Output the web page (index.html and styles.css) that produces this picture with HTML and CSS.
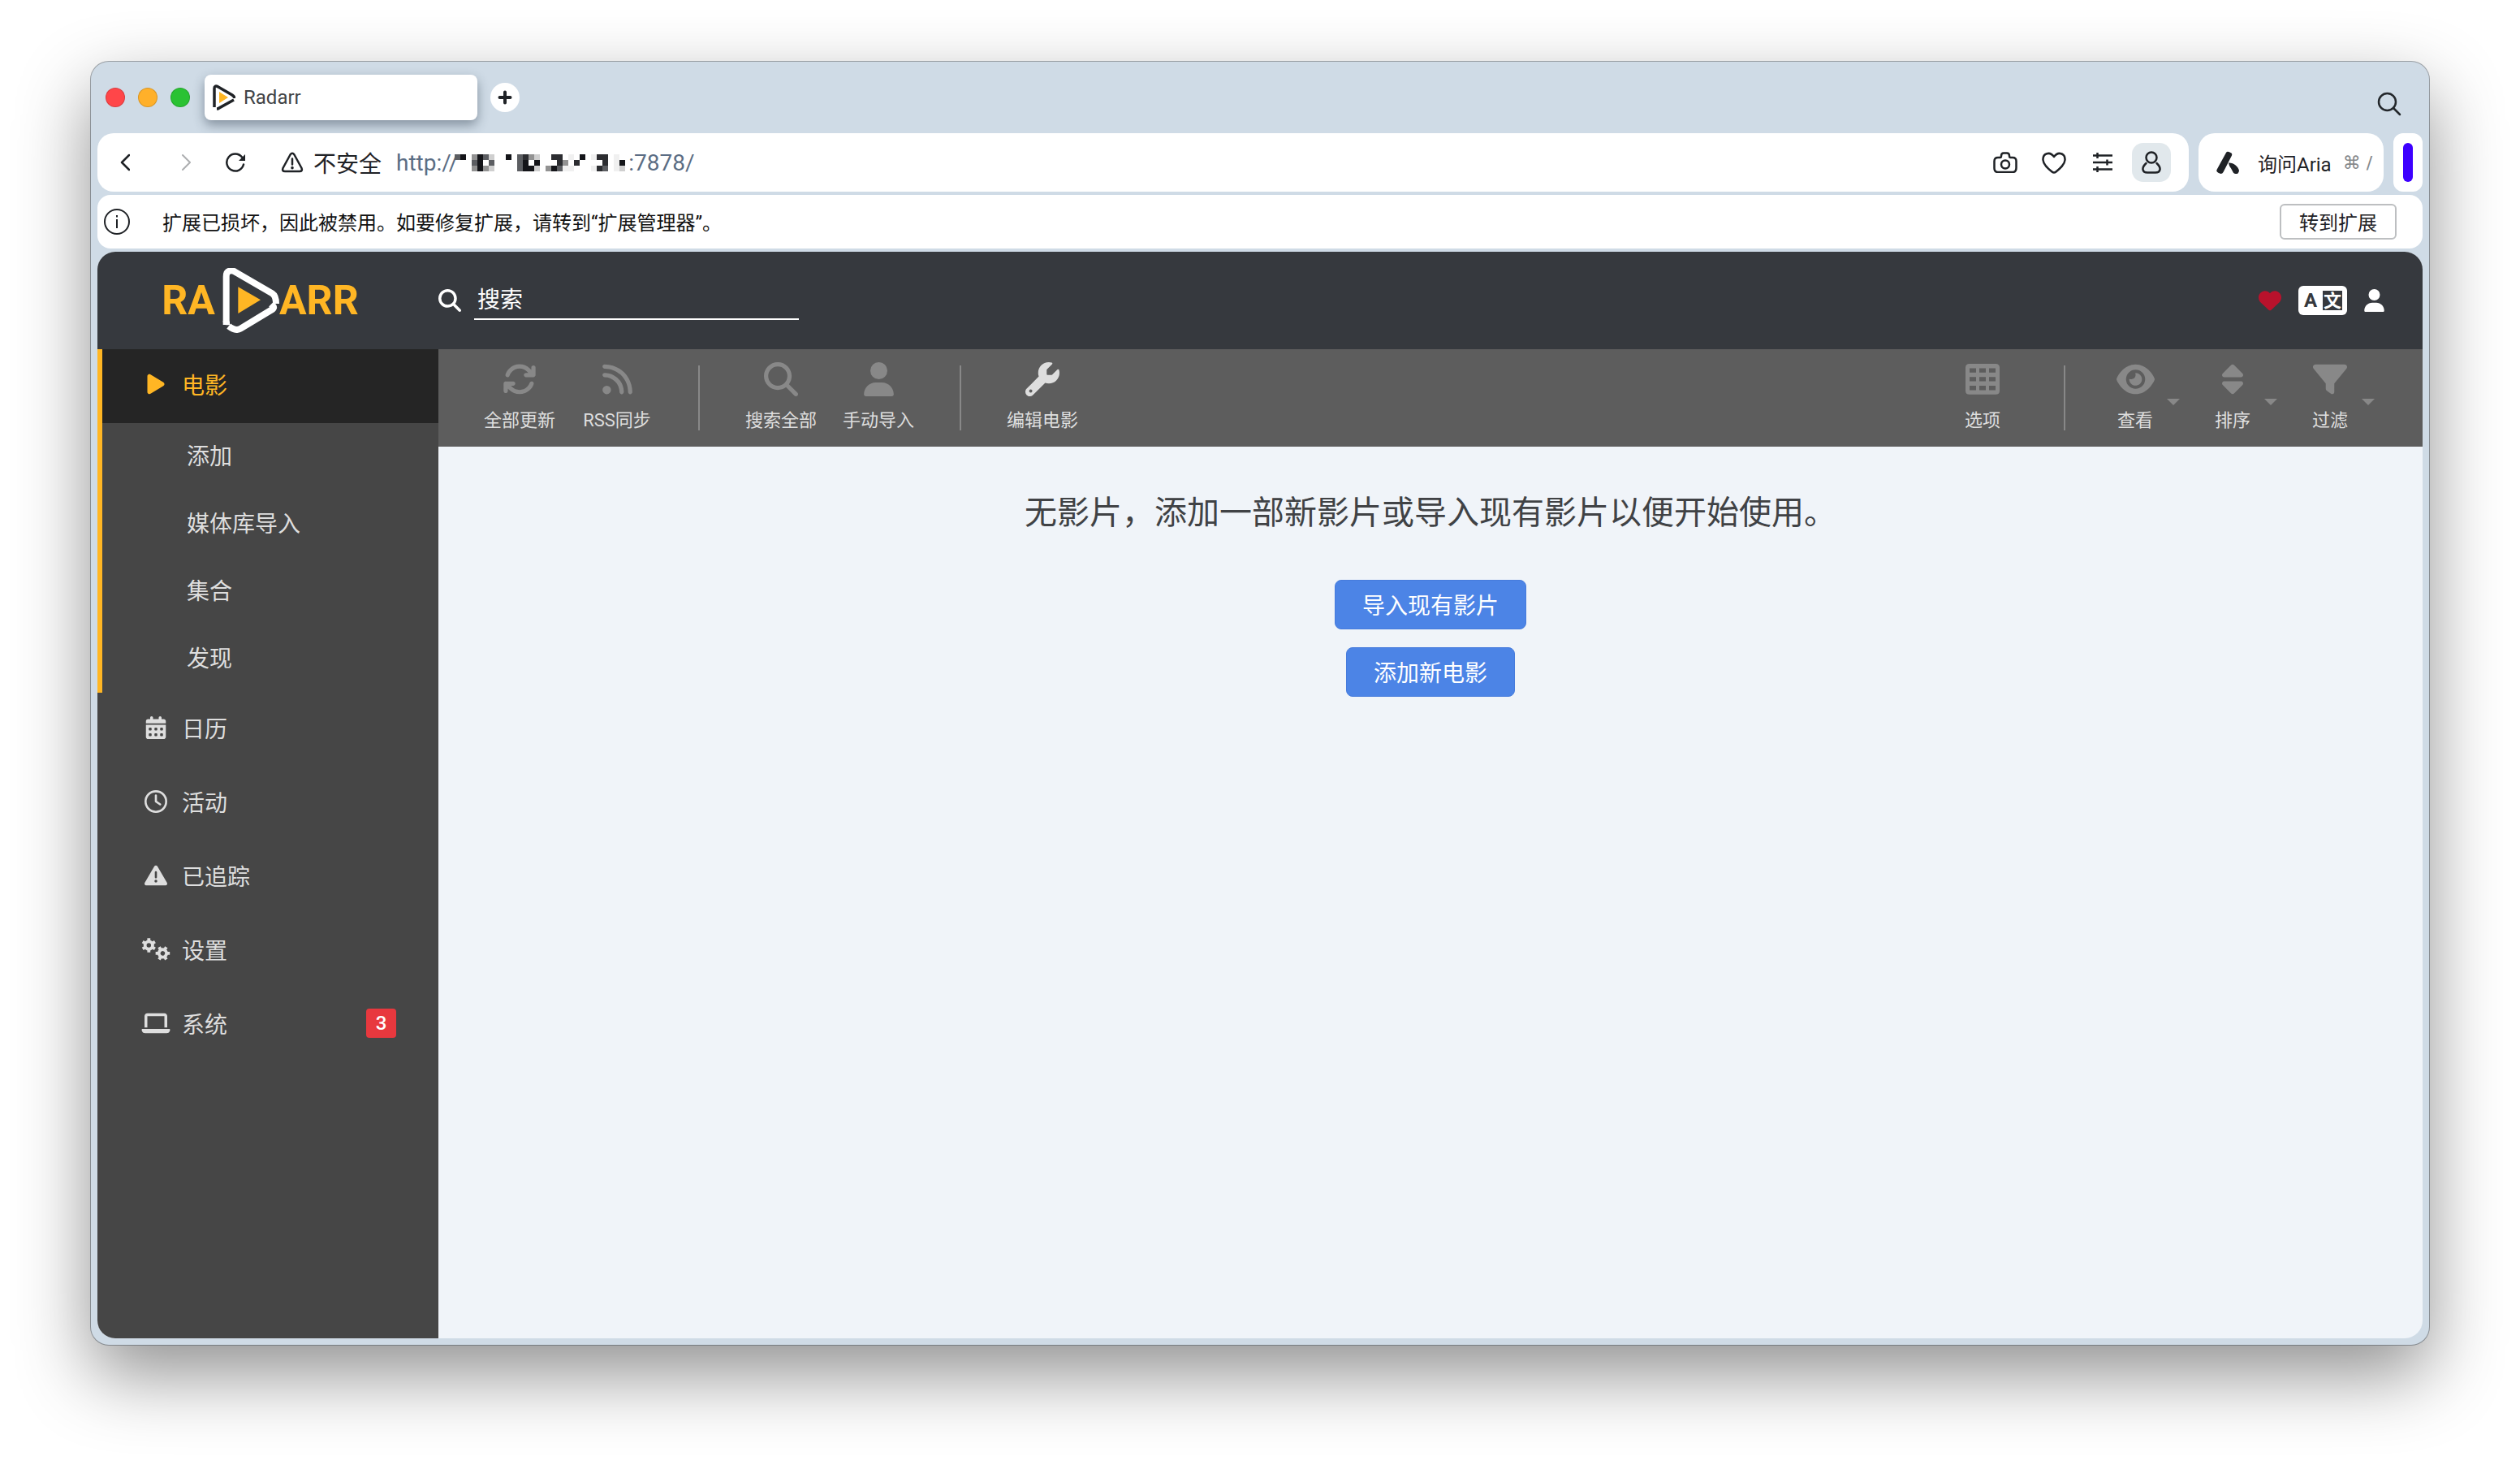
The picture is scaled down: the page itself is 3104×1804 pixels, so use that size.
FILE: index.html
```html
<!DOCTYPE html>
<html lang="zh-CN">
<head>
<meta charset="utf-8">
<title>Radarr</title>
<link rel="stylesheet" href="styles.css">
</head>
<body>
<div class="window">
  <div class="tab-strip">
    <div class="lights">
      <span class="light light-close"></span>
      <span class="light light-min"></span>
      <span class="light light-max"></span>
    </div>
    <button class="tab" type="button">
      <svg width="28" height="32" viewBox="0 0 28 32" fill="none"><path d="M2 28V5q0-4 4-2.500L24 13q3 2 3 4" stroke="#1f2226" stroke-width="3.500"/><path d="M5 30q2 0 3-1L26 19" stroke="#1f2226" stroke-width="3.500"/><path d="M8 9l11 7-11 7z" fill="#ffb624"/></svg>
      <span>Radarr</span>
    </button>
    <button class="new-tab" type="button" aria-label="新标签页">
      <svg width="18" height="18" viewBox="0 0 18 18"><path d="M9 2.500v13M2.500 9h13" stroke="#1f2226" stroke-width="4" stroke-linecap="round"/></svg>
    </button>
    <button class="tab-search" type="button" aria-label="搜索标签页">
      <svg width="30" height="30" viewBox="0 0 30 30" fill="none" stroke="#23272b" stroke-width="2.500" stroke-linecap="round"><circle cx="12.500" cy="12.500" r="10.500"/><path d="M20 20l8 8"/></svg>
    </button>
  </div>

  <div class="address-row">
    <div class="address-bar">
      <button class="nav-back" type="button" aria-label="后退"><svg width="12" height="22" viewBox="0 0 12 22" fill="none"><path d="M11 2L2 11l9 9" stroke="#1f2226" stroke-width="2.500" stroke-linecap="round" stroke-linejoin="round"/></svg></button>
      <button class="nav-forward" type="button" aria-label="前进"><svg width="12" height="22" viewBox="0 0 12 22" fill="none"><path d="M1 2l9 9-9 9" stroke="#adafb1" stroke-width="2" stroke-linecap="round" stroke-linejoin="round"/></svg></button>
      <button class="nav-reload" type="button" aria-label="刷新"><svg width="24" height="24" viewBox="0 0 24 24" fill="none"><path d="M22 14.500A10.500 10.500 0 1 1 20 5.500" stroke="#1f2226" stroke-width="2.500" stroke-linecap="round"/><path d="M24 2v8h-8z" fill="#1f2226"/></svg></button>
      <svg class="warn" width="28" height="26" viewBox="0 0 28 26" fill="none" stroke="#1f2226" stroke-width="2.500" stroke-linecap="round" stroke-linejoin="round"><path d="M11.500 3.500q2.500-3.500 5 0L25.500 20q1.500 4-2.500 4H5q-4 0-2.500-4zM14 8.500v7"/><path d="M14 19.500v.2" stroke-width="3.500"/></svg>
      <span class="insecure">不安全</span>
      <div class="url"><span>http://</span><svg class="mask" width="210" height="21" viewBox="0 0 30 3" shape-rendering="crispEdges">
        <path fill="#141519" d="M1 0h1v1H1zM4 0h1v3H4zM9 0h1v1H9zM12 1h1v2h-1zM13 2h1v1h-1zM14 1h1v1h-1zM17 2h1v1h-1zM22 0h1v1h-1zM29 1h1v1h-1z"/>
        <path fill="#2c2d31" d="M12 0h1v1h-1zM17 0h2v1h-2zM18 1h1v1h-1zM21 1h1v1h-1zM25 0h2v1h-2zM26 1h1v1h-1zM25 2h1v1h-1z"/>
        <path fill="#5c5e62" d="M0 0h1v1H0zM3 1h1v1H3zM5 0h1v1H5zM6 1h1v1H6zM11 0h1v3h-1zM18 2h1v1h-1zM26 2h1v1h-1z"/>
        <path fill="#929292" d="M3 0h1v1H3zM3 2h1v1H3zM5 2h1v1H5zM13 0h1v1h-1zM16 2h1v1h-1zM19 1h1v1h-1z"/>
        <path fill="#cfcfcf" d="M6 0h1v1H6zM6 2h1v1H6zM14 0h1v1h-1zM14 2h1v1h-1zM29 2h1v1h-1z"/>
        <path fill="#f0f0f0" d="M20 0h1v1h-1zM19 2h2v1h-2zM24 0h1v1h-1zM24 2h1v1h-1zM28 0h1v3h-1z"/>
      </svg><span>:7878/</span></div>
      <div class="address-actions">
        <button type="button" aria-label="快照"><svg width="30" height="26" viewBox="0 0 30 26" fill="none" stroke="#1f2226" stroke-width="2.500" stroke-linejoin="round"><path d="M6 7h2.500q1.500 0 1.500-2 0-3.500 3-3.500h4q3 0 3 3.500 0 2 1.500 2H24q4.500 0 4.500 4.500v8Q28.500 25 24 25H6q-4.500 0-4.500-5v-8.500Q1.500 7 6 7z"/><circle cx="15" cy="15.500" r="5"/></svg></button>
        <button type="button" aria-label="收藏"><svg width="30" height="27" viewBox="0 0 30 27" fill="none" stroke="#1f2226" stroke-width="2.500" stroke-linejoin="round"><path d="M15 6C10-1 1 1.500 1.500 10c.5 6 6 10.500 11 14.500q2.500 2 5 0c5-4 10.500-8.500 11-14.500C29 1.500 20-1 15 6z"/></svg></button>
        <button type="button" aria-label="设置"><svg width="26" height="26" viewBox="0 0 26 26" fill="none" stroke="#1f2226" stroke-width="2.500"><path d="M1 4.500h24M1 13h24M1 21.500h24M6.500 1v7M18.500 9.500v7M6.500 18v7"/></svg></button>
        <button class="profile" type="button" aria-label="个人资料"><svg width="24" height="28" viewBox="0 0 24 28" fill="none" stroke="#1f2226" stroke-width="2.500" stroke-linecap="round"><circle cx="12" cy="8" r="6.500"/><path d="M5.500 15C-1 21 1 26.500 7 26.500h10c6 0 8-5.500 1.500-11.500"/></svg></button>
      </div>
    </div>
    <button class="aria" type="button">
      <svg width="30" height="30" viewBox="0 0 30 30" fill="#1f2226"><path d="M13 3q1-2 3.500-1l2 1q2.500 1 1.500 3.500L9.500 27q-1 2-3 2Q0 27 1.500 24z"/><path d="M16 15.500C22 15 28 20 29 25q0 2-2 4h-3q-2 0-3-3c-1.500-4-4-5-5-10.500z"/></svg>
      <span>询问Aria</span><span class="shortcut">⌘ /</span>
    </button>
    <div class="side-pill"><span></span></div>
  </div>

  <div class="notice">
    <svg width="32" height="32" viewBox="0 0 32 32" fill="none" stroke="#1f2226" stroke-width="2"><circle cx="16" cy="16" r="15"/><path d="M16 13v11M16 8v2.500"/></svg>
    <p>扩展已损坏，因此被禁用。如要修复扩展，请转到“扩展管理器”。</p>
    <button type="button">转到扩展</button>
  </div>

  <div class="app">
    <header class="app-header">
      <a class="logo" href="#" aria-label="Radarr">
        <span>RA</span>
        <svg width="70" height="80" viewBox="282 30 210 240"><path class="ring" d="M296 240V62q0-22 20-22 6 0 12 4l138 80q14 9 14 38"/><path d="M284 225q0 16 13 16h12v-14z" fill="#fff"/><path class="ring" d="M462 164l8 8q4 6-4 11L349 254q-18 11-44-9"/><path d="M340 100v98l83-50z" fill="#ffb624"/></svg>
        <span>ARR</span>
      </a>
      <label class="search">
        <svg width="28" height="28" viewBox="0 0 512 512"><path d="M416 208c0 45.900-14.900 88.300-40 122.700L502.600 457.400c12.500 12.500 12.500 32.800 0 45.300s-32.800 12.500-45.300 0L330.700 376c-34.400 25.200-76.800 40-122.700 40C93.100 416 0 322.900 0 208S93.100 0 208 0S416 93.100 416 208zM208 352a144 144 0 1 0 0-288 144 144 0 1 0 0 288z"/></svg>
        <input type="text" placeholder="搜索" aria-label="搜索">
      </label>
      <div class="header-actions">
        <a class="donate" href="#" aria-label="捐赠"><svg width="28" height="28" viewBox="0 0 512 512"><path d="M47.600 300.400L228.300 469.100c7.500 7 17.400 10.900 27.700 10.900s20.200-3.900 27.700-10.900L464.400 300.400c30.400-28.300 47.600-68 47.600-109.500v-5.800c0-69.900-50.500-129.500-119.400-141C347 36.500 300.600 51.400 268 84L256 96 244 84c-32.600-32.600-79-47.500-124.600-39.900C50.500 55.600 0 115.200 0 185.100v5.800c0 41.500 17.200 81.200 47.600 109.500z"/></svg></a>
        <a href="#" aria-label="语言"><svg width="60" height="36" viewBox="0 0 60 36"><rect width="60" height="36" rx="6"/><rect class="cut" x="30" y="6" width="24" height="24"/><text class="cut glyph-a" x="15" y="26">A</text><text class="glyph-wen" x="42" y="26">文</text></svg></a>
        <button type="button" aria-label="用户"><svg width="25" height="28" viewBox="0 0 448 512"><path d="M224 256A128 128 0 1 0 224 0a128 128 0 1 0 0 256zm-45.700 48C79.800 304 0 383.800 0 482.300C0 498.700 13.300 512 29.700 512H418.300c16.400 0 29.700-13.300 29.700-29.700C448 383.800 368.200 304 269.700 304H178.300z"/></svg></button>
      </div>
    </header>

    <div class="app-body">
      <nav class="sidebar">
        <div class="group-active">
          <a class="item current" href="#"><svg width="36" height="28" viewBox="-137 0 658 512"><path d="M73 39c-14.800-9.100-33.400-9.400-48.500-.9S0 62.600 0 80V432c0 17.400 9.400 33.400 24.500 41.900s33.700 8.100 48.500-.9L361 297c14.300-8.700 23-24.200 23-41s-8.700-32.200-23-41L73 39z"/></svg>电影</a>
          <a class="child" href="#">添加</a>
          <a class="child" href="#">媒体库导入</a>
          <a class="child" href="#">集合</a>
          <a class="child" href="#">发现</a>
        </div>
        <a class="item" href="#"><svg width="36" height="28" viewBox="-105 0 658 512"><path d="M128 0c17.700 0 32 14.300 32 32V64H288V32c0-17.700 14.300-32 32-32s32 14.300 32 32V64h48c26.500 0 48 21.500 48 48v48H0V112C0 85.500 21.500 64 48 64H96V32c0-17.700 14.300-32 32-32zM0 192H448V464c0 26.500-21.500 48-48 48H48c-26.500 0-48-21.500-48-48V192zm64 80v32c0 8.800 7.200 16 16 16h32c8.800 0 16-7.200 16-16V272c0-8.800-7.200-16-16-16H80c-8.800 0-16 7.200-16 16zm128 0v32c0 8.800 7.200 16 16 16h32c8.800 0 16-7.200 16-16V272c0-8.800-7.200-16-16-16H208c-8.800 0-16 7.200-16 16zm144-16c-8.800 0-16 7.200-16 16v32c0 8.800 7.200 16 16 16h32c8.800 0 16-7.200 16-16V272c0-8.800-7.200-16-16-16H336zM64 400v32c0 8.800 7.200 16 16 16h32c8.800 0 16-7.200 16-16V400c0-8.800-7.200-16-16-16H80c-8.800 0-16 7.200-16 16zm144-16c-8.800 0-16 7.200-16 16v32c0 8.800 7.200 16 16 16h32c8.800 0 16-7.200 16-16V400c0-8.800-7.200-16-16-16H208zm112 16v32c0 8.800 7.200 16 16 16h32c8.800 0 16-7.200 16-16V400c0-8.800-7.200-16-16-16H336c-8.800 0-16 7.200-16 16z"/></svg>日历</a>
        <a class="item" href="#"><svg width="36" height="28" viewBox="-73 0 658 512"><path d="M464 256A208 208 0 1 1 48 256a208 208 0 1 1 416 0zM0 256a256 256 0 1 0 512 0A256 256 0 1 0 0 256zM232 120V256c0 8 4 15.500 10.700 20l96 64c11 7.400 25.900 4.400 33.300-6.700s4.400-25.900-6.700-33.300L280 243.200V120c0-13.300-10.700-24-24-24s-24 10.700-24 24z"/></svg>活动</a>
        <a class="item" href="#"><svg width="36" height="28" viewBox="-73 0 658 512"><path d="M256 32c14.200 0 27.300 7.500 34.500 19.800l216 368c7.300 12.400 7.300 27.700 .2 40.100S486.300 480 472 480H40c-14.300 0-27.600-7.700-34.700-20.100s-7-27.800 .2-40.100l216-368C228.700 39.500 241.800 32 256 32zm0 128c-13.300 0-24 10.700-24 24V296c0 13.300 10.700 24 24 24s24-10.700 24-24V184c0-13.300-10.700-24-24-24zm32 224a32 32 0 1 0 -64 0 32 32 0 1 0 64 0z"/></svg>已追踪</a>
        <a class="item" href="#"><svg width="36" height="28" viewBox="-9 0 658 512"><g class="gear"><g transform="translate(161 165)"><circle r="85"/><path d="M0-90V-160M0 90V160M78-45L139-80M-78 45L-139 80M78 45L139 80M-78-45L-139-80"/></g><g transform="translate(474 345) rotate(30)"><circle r="85"/><path d="M0-90V-160M0 90V160M78-45L139-80M-78 45L-139 80M78 45L139 80M-78-45L-139-80"/></g></g></svg>设置</a>
        <a class="item" href="#"><svg width="36" height="28" viewBox="-9 0 658 512"><path d="M128 32C92.700 32 64 60.700 64 96V352h64V96H512V352h64V96c0-35.300-28.700-64-64-64H128zM19.200 384C8.600 384 0 392.600 0 403.200C0 445.600 34.400 480 76.800 480H563.200c42.400 0 76.800-34.400 76.800-76.800c0-10.600-8.600-19.200-19.200-19.200H19.200z"/></svg>系统<span class="badge">3</span></a>
      </nav>

      <main class="page">
        <div class="toolbar">
          <button class="tool disabled" type="button"><svg width="42" height="42" viewBox="0 0 512 512"><path d="M105.100 202.600c7.700-21.800 20.200-42.300 37.800-59.800c62.500-62.500 163.800-62.500 226.300 0L386.300 160H352c-17.700 0-32 14.300-32 32s14.300 32 32 32H463.900c17.700 0 32-14.300 32-32V80c0-17.700-14.300-32-32-32s-32 14.300-32 32v35.200L414.400 97.600c-87.500-87.500-229.300-87.500-316.800 0C73.200 122 55.600 150.700 44.800 181.400c-5.900 16.700 2.900 34.900 19.500 40.800s34.900-2.900 40.800-19.500zM39 289.300c-5 1.500-9.800 4.200-13.700 8.200c-4 4-6.700 8.800-8.100 14c-.3 1.200-.6 2.500-.8 3.800c-.3 1.700-.4 3.400-.4 5.100V432c0 17.700 14.300 32 32 32s32-14.300 32-32V396.900l17.600 17.500c87.500 87.400 229.300 87.400 316.700 0c24.400-24.400 42.100-53.100 52.900-83.700c5.900-16.700-2.900-34.900-19.500-40.800s-34.900 2.900-40.800 19.500c-7.700 21.800-20.200 42.300-37.800 59.800c-62.500 62.500-163.800 62.500-226.300 0l-.1-.1L125.600 352H160c17.700 0 32-14.300 32-32s-14.300-32-32-32H48.400c-1.600 0-3.200 .1-4.800 .3s-3.100 .5-4.600 1z"/></svg>全部更新</button>
          <button class="tool disabled" type="button"><svg width="37" height="42" viewBox="0 0 448 512"><path d="M0 64C0 46.300 14.300 32 32 32c229.800 0 416 186.200 416 416c0 17.700-14.300 32-32 32s-32-14.300-32-32C384 253.600 226.400 96 32 96C14.300 96 0 81.700 0 64zM0 416a64 64 0 1 1 128 0A64 64 0 1 1 0 416zM32 160c159.100 0 288 128.900 288 288c0 17.700-14.300 32-32 32s-32-14.300-32-32c0-123.700-100.300-224-224-224c-17.700 0-32-14.300-32-32s14.300-32 32-32z"/></svg>RSS同步</button>
          <span class="separator"></span>
          <button class="tool disabled" type="button"><svg width="42" height="42" viewBox="0 0 512 512"><path d="M416 208c0 45.900-14.900 88.300-40 122.700L502.600 457.400c12.500 12.500 12.500 32.800 0 45.300s-32.800 12.500-45.300 0L330.700 376c-34.400 25.200-76.800 40-122.700 40C93.100 416 0 322.900 0 208S93.100 0 208 0S416 93.100 416 208zM208 352a144 144 0 1 0 0-288 144 144 0 1 0 0 288z"/></svg>搜索全部</button>
          <button class="tool disabled" type="button"><svg width="37" height="42" viewBox="0 0 448 512"><path d="M224 256A128 128 0 1 0 224 0a128 128 0 1 0 0 256zm-45.700 48C79.800 304 0 383.800 0 482.300C0 498.700 13.300 512 29.700 512H418.300c16.400 0 29.700-13.300 29.700-29.700C448 383.800 368.200 304 269.700 304H178.300z"/></svg>手动导入</button>
          <span class="separator"></span>
          <button class="tool" type="button"><svg width="42" height="42" viewBox="0 0 512 512"><path d="M352 320c88.400 0 160-71.600 160-160c0-15.300-2.200-30.100-6.200-44.200c-3.100-10.800-16.400-13.200-24.300-5.300l-76.800 76.800c-3 3-7.100 4.700-11.300 4.700H336c-8.800 0-16-7.200-16-16V118.600c0-4.200 1.700-8.300 4.700-11.300l76.800-76.800c7.900-7.900 5.400-21.200-5.300-24.300C382.100 2.200 367.300 0 352 0C263.600 0 192 71.600 192 160c0 19.100 3.400 37.500 9.500 54.500L19.900 396.100C7.200 408.800 0 426.100 0 444.100C0 481.600 30.400 512 67.900 512c18 0 35.300-7.200 48-19.900L297.500 310.500c17 6.200 35.400 9.500 54.500 9.500zM80 408a24 24 0 1 1 0 48 24 24 0 1 1 0-48z"/></svg>编辑电影</button>
          <div class="toolbar-right">
            <button class="tool disabled" type="button"><svg width="42" height="42" viewBox="0 0 42 42"><path fill-rule="evenodd" d="M5 0H37q5 0 5 5V37q0 5-5 5H5q-5 0-5-5V5q0-5 5-5zM5 6v6h8V6zM17 6v6h8V6zM29 6v6h8V6zM5 18v6h8v-6zM17 18v6h8v-6zM29 18v6h8v-6zM5 30v6h8v-6zM17 30v6h8v-6zM29 30v6h8v-6z" transform="translate(0 2) scale(1 .9)"/></svg>选项</button>
            <span class="separator"></span>
            <button class="tool menu disabled" type="button"><svg width="47" height="42" viewBox="0 0 576 512"><path d="M288 32c-80.800 0-145.500 36.800-192.600 80.600C48.600 156 17.300 208 2.500 243.700c-3.300 7.900-3.300 16.700 0 24.600C17.300 304 48.600 356 95.400 399.400C142.500 443.200 207.200 480 288 480s145.500-36.800 192.600-80.600c46.800-43.500 78.100-95.400 93-131.100c3.300-7.900 3.300-16.700 0-24.600c-14.900-35.700-46.200-87.700-93-131.100C433.500 68.800 368.800 32 288 32zM144 256a144 144 0 1 1 288 0 144 144 0 1 1 -288 0zm144-64c0 35.300-28.700 64-64 64c-7.100 0-13.900-1.200-20.300-3.300c-5.500-1.800-11.900 1.600-11.700 7.400c.3 6.900 1.300 13.800 3.200 20.700c13.700 51.200 66.400 81.600 117.600 67.900s81.600-66.400 67.900-117.600c-11.100-41.500-47.800-69.400-88.600-71.100c-5.800-.2-9.200 6.100-7.400 11.700c2.100 6.400 3.300 13.200 3.300 20.300z"/></svg>查看<span class="caret"></span></button>
            <button class="tool menu disabled" type="button"><svg width="26" height="42" viewBox="0 0 320 512"><path d="M137.400 41.400c12.500-12.500 32.800-12.500 45.300 0l128 128c9.200 9.200 11.900 22.900 6.900 34.900s-16.600 19.800-29.600 19.800H32c-12.900 0-24.600-7.800-29.600-19.800s-2.200-25.700 6.900-34.900l128-128zm0 429.300l-128-128c-9.200-9.200-11.900-22.900-6.900-34.900s16.600-19.800 29.600-19.800H288c12.900 0 24.600 7.800 29.600 19.800s2.200 25.700-6.900 34.900l-128 128c-12.500 12.500-32.800 12.500-45.300 0z"/></svg>排序<span class="caret"></span></button>
            <button class="tool menu disabled" type="button"><svg width="42" height="42" viewBox="0 0 512 512"><path d="M3.900 54.900C10.500 40.900 24.500 32 40 32H472c15.500 0 29.500 8.900 36.100 22.900s4.600 30.500-5.200 42.500L320 320.900V448c0 12.100-6.800 23.200-17.700 28.600s-23.800 4.300-33.500-3l-64-48c-8.100-6-12.800-15.500-12.800-25.600V320.900L9 97.300C-.7 85.400-2.800 68.800 3.900 54.900z"/></svg>过滤<span class="caret"></span></button>
          </div>
        </div>
        <section class="empty">
          <p>无影片，添加一部新影片或导入现有影片以便开始使用。</p>
          <button type="button">导入现有影片</button>
          <button type="button">添加新电影</button>
        </section>
      </main>
    </div>
  </div>
</div>
</body>
</html>
```
FILE: styles.css
```css
* { box-sizing: border-box; }

body {
  margin: 0;
  min-height: 100vh;
  padding: 76px 112px 148px;
  display: flex;
  background: #fff;
  font-family: Roboto, "Noto Sans CJK SC", sans-serif;
  font-size: 28px;
  color: #1f2226;
}

button {
  margin: 0;
  padding: 0;
  border: 0;
  background: none;
  font: inherit;
  color: inherit;
  display: flex;
  align-items: center;
  justify-content: center;
}

a { color: inherit; text-decoration: none; }
p { margin: 0; }
svg { display: block; flex: none; }

.window {
  flex: 1;
  min-width: 0;
  display: flex;
  flex-direction: column;
  padding: 0 8px 8px;
  border-radius: 22px;
  background: #cfdbe6;
  box-shadow: 0 0 0 1px rgba(70, 80, 90, .5), 0 36px 90px rgba(0, 0, 0, .44);
}

/* Tab strip */
.tab-strip { display: flex; align-items: center; height: 88px; padding: 0 26px 0 10px; }
.lights { display: flex; gap: 16px; margin-right: 18px; }
.light { width: 24px; height: 24px; border-radius: 50%; border: 1px solid rgba(0, 0, 0, .15); }
.light-close { background: #ff4649; }
.light-min { background: #ffb02a; }
.light-max { background: #2ac233; }
.tab {
  width: 336px;
  height: 56px;
  padding-left: 10px;
  gap: 10px;
  justify-content: flex-start;
  border-radius: 8px;
  background: #fff;
  box-shadow: 0 6px 14px rgba(40, 55, 70, .45);
  color: #414346;
  font-size: 24px;
}
.new-tab { width: 36px; height: 36px; margin-left: 16px; border-radius: 50%; background: #fff; }
.tab-search { margin: 16px 0 0 auto; }

/* Address row */
.address-row { position: relative; display: flex; gap: 12px; height: 72px; }
.address-bar {
  flex: 1;
  display: flex;
  align-items: center;
  padding: 0 22px 0 28px;
  border-radius: 20px;
  background: #fff;
}
.nav-forward { margin-left: 64px; }
.nav-reload { margin-left: 42px; }
.warn { margin-left: 44px; }
.insecure { margin-left: 12px; }
.url { display: flex; align-items: center; margin-left: 18px; color: #5b6d84; }
.mask { margin: 0 4px 0 -4px; }
.address-actions { display: flex; gap: 12px; margin-left: auto; }
.address-actions button { width: 48px; height: 48px; border-radius: 14px; }
.address-actions .profile { background: #e1e8ec; }
.aria {
  width: 228px;
  padding-left: 21px;
  justify-content: flex-start;
  border-radius: 20px;
  background: #fff;
  font-size: 24px;
}
.aria svg { margin-right: 22px; }
.shortcut { margin-left: 14px; color: #85888b; font: 22px "DejaVu Sans", sans-serif; }
.side-pill {
  display: flex;
  align-items: center;
  justify-content: center;
  width: 36px;
  border-radius: 12px;
  background: #fff;
}
.side-pill span { width: 12px; height: 48px; border-radius: 6px; background: #3d00ff; }

/* Extension notice */
.notice {
  display: flex;
  align-items: center;
  height: 66px;
  margin: 4px 0;
  padding: 0 32px 0 8px;
  border-radius: 16px;
  background: #fff;
  font-size: 24px;
}
.notice p { margin-left: 40px; padding-bottom: 2px; color: #111; }
.notice button {
  width: 144px;
  height: 44px;
  margin-left: auto;
  padding-bottom: 2px;
  border: 2px solid #bdbfc1;
  border-radius: 6px;
}

/* Application */
.app {
  flex: 1;
  display: flex;
  flex-direction: column;
  overflow: hidden;
  border-radius: 22px;
  background: #f0f4f9;
}
.app-header {
  display: flex;
  align-items: center;
  height: 120px;
  padding-right: 47px;
  background: #36393e;
  color: #fff;
}
.app-header svg { fill: currentColor; }
.logo {
  display: grid;
  grid-template-columns: 84px 70px 86px;
  align-items: center;
  width: 240px;
  margin: 0 110px 0 70px;
  color: #ffb624;
  font: 700 50px Roboto, sans-serif;
}
.logo span:first-child { text-align: center; }
.logo .ring { fill: none; stroke: #fff; stroke-width: 24; }
.search { display: flex; align-items: center; gap: 16px; }
.search input {
  width: 400px;
  height: 48px;
  padding: 0 4px;
  border: 0;
  border-bottom: 2px solid #fff;
  background: none;
  color: #fff;
  font: inherit;
}
.search input::placeholder { color: #fff; opacity: 1; }
.header-actions { display: flex; align-items: center; gap: 21px; margin-left: auto; }
.donate { color: #b9122c; }
.app-header .cut { fill: #36393e; }
.glyph-a { font: 700 24px Roboto, sans-serif; text-anchor: middle; }
.glyph-wen { font: 700 22px "Noto Sans CJK SC", sans-serif; text-anchor: middle; }

.app-body { flex: 1; display: flex; }

/* Sidebar */
.sidebar { width: 420px; background: #464646; color: #dedede; }
.group-active { border-left: 6px solid #ffb624; }
.item {
  display: flex;
  align-items: center;
  height: 91px;
  padding: 0 52px 6px 54px;
}
.item svg { margin-right: 14px; fill: currentColor; }
.group-active .item { padding-left: 48px; }
.item.current { background: #252525; color: #ffb624; }
.child { display: flex; align-items: center; height: 83px; padding: 0 0 6px 104px; }
.item .gear { fill: none; stroke: currentColor; stroke-width: 70; }
.badge {
  width: 37px;
  height: 36px;
  margin-left: auto;
  border-radius: 4px;
  background: #e8383e;
  color: #fff;
  font-size: 24px;
  font-weight: 500;
  line-height: 36px;
  text-align: center;
}

/* Page */
.page { flex: 1; min-width: 0; }
.toolbar {
  display: flex;
  align-items: center;
  height: 120px;
  padding: 0 40px;
  background: #5d5d5d;
  color: #dedede;
}
.tool {
  flex-direction: column;
  gap: 14px;
  width: 120px;
  height: 120px;
  font-size: 22px;
  line-height: 32px;
}
.tool svg { fill: currentColor; }
.tool.disabled svg { color: #888; }
.menu { position: relative; padding-right: 28px; }
.caret {
  position: absolute;
  right: 19px;
  top: 61px;
  border: 8px solid transparent;
  border-top-color: #888;
  border-bottom: 0;
}
.separator { width: 2px; height: 80px; margin: 0 40px; background: #888; }
.toolbar-right { display: flex; align-items: center; margin-left: auto; }

.empty { display: flex; flex-direction: column; align-items: center; padding-top: 52px; }
.empty p { margin-bottom: 52px; font-size: 40px; line-height: 60px; color: #404245; }
.empty button {
  height: 61px;
  margin-bottom: 22px;
  padding: 0 33px 2px;
  border: 1px solid #467bdc;
  border-radius: 8px;
  background: #4c84e6;
  color: #fff;
}
```
